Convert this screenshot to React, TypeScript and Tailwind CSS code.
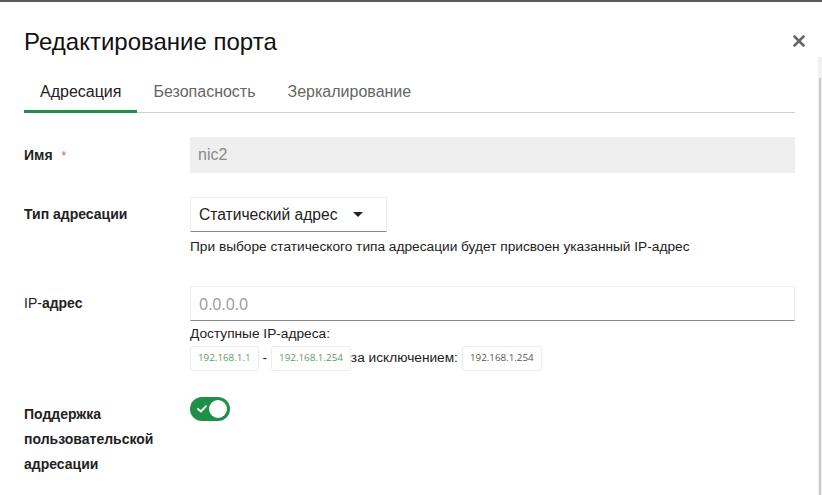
import React, { FC, useState } from "react";

const tabs = ["Адресация", "Безопасность", "Зеркалирование"];

const Chip: FC<{ text: string; green?: boolean }> = ({ text, green }) => (
	<span
		className={`inline-flex items-center h-[25px] px-[7px] border border-[#ececec] rounded-[3px] bg-white text-[9.8px] font-['Open_Sans',sans-serif] ${
			green ? "text-[#5d9a6c]" : "text-[#555]"
		}`}
	>
		{text}
	</span>
);

const App: FC = () => {
	const [tab, setTab] = useState(0);
	const [custom, setCustom] = useState(true);
	return (
		<div className="relative w-full h-[495px] overflow-hidden bg-white border-t-2 border-[#585858] font-['Liberation_Sans',Arial,sans-serif] text-[#222]">
			{/* scrollbar track */}
			<div className="absolute right-0 top-[55px] bottom-0 w-[4px] bg-[#f1f1f1]">
				<div className="absolute left-[1px] top-[21px] bottom-0 w-[2px] bg-[#c9c9c9]" />
			</div>

			<div className="pl-6 pr-[27px]">
				<div className="flex items-center justify-between pt-[25px]">
					<h1 className="text-[24px] leading-[30px] text-[#111]">Редактирование порта</h1>
					<button className="-mr-[10px] text-[#666] mt-[-2px]">
						<svg width="12" height="12" viewBox="0 0 12 12">
							<path d="M1.5 1.5L10.5 10.5M10.5 1.5L1.5 10.5" stroke="currentColor" strokeWidth="2.6" strokeLinecap="round" />
						</svg>
					</button>
				</div>

				<div className="flex mt-[23px] border-b border-[#cfcfcf]">
					{tabs.map((t, i) => (
						<div
							key={t}
							onClick={() => setTab(i)}
							className={`px-4 pb-[6px] text-[16px] leading-[24px] cursor-pointer -mb-px border-b-[3px] ${
								tab === i ? "border-[#1f8f4a] text-[#222]" : "border-transparent text-[#666]"
							}`}
						>
							{t}
						</div>
					))}
				</div>

				{/* Имя */}
				<div className="flex items-center mt-6">
					<div className="w-[166px] text-[14px] font-bold">
						Имя <span className="ml-[5px] text-[12px] font-normal text-[#e25555]">*</span>
					</div>
					<div className="flex-1 h-9 flex items-center px-2 bg-[#efefef] text-[16px] text-[#8a8a8a]">nic2</div>
				</div>

				{/* Тип адресации */}
				<div className="flex mt-6">
					<div className="w-[166px] h-[35px] flex items-center text-[14px] font-bold">Тип адресации</div>
					<div>
						<div className="w-[197px] h-[35px] flex items-center px-2 border border-[#eee] border-b-[#8a8a8a] text-[15.6px]">
							<span>Статический адрес</span>
							<svg className="ml-[15px]" width="10" height="5" viewBox="0 0 10 5">
								<path d="M0 0H10L5 5Z" fill="#222" />
							</svg>
						</div>
						<p className="mt-[5px] text-[13.7px] leading-[20px]">
							При выборе статического типа адресации будет присвоен указанный IP-адрес
						</p>
					</div>
				</div>

				{/* IP-адрес */}
				<div className="flex mt-[29px]">
					<div className="w-[166px] h-[35px] flex items-center text-[14px]">
						<span className="font-medium">IP-</span>
						<span className="font-bold">адрес</span>
					</div>
					<div className="flex-1">
						<div className="h-[35px] flex items-center px-2 border border-[#eee] border-b-[#8a8a8a] text-[16px] text-[#9a9a9a] font-['Open_Sans',sans-serif]">
							0.0.0.0
						</div>
						<p className="mt-[3px] text-[13.7px] leading-[20px]">Доступные IP-адреса:</p>
						<div className="flex items-center mt-[2px] text-[13.7px]">
							<Chip text="192.168.1.1" green />
							<span className="mx-1">-</span>
							<Chip text="192.168.1.254" green />
							<span className="mr-1">за исключением:</span>
							<Chip text="192.168.1.254" />
						</div>
					</div>
				</div>

				{/* Поддержка пользовательской адресации */}
				<div className="flex mt-[26px]">
					<div className="w-[166px] pt-[5px] text-[14px] leading-[25px] font-bold">
						Поддержка
						<br />
						пользовательской
						<br />
						адресации
					</div>
					<button
						onClick={() => setCustom((p) => !p)}
						className={`relative w-10 h-6 rounded-full ${custom ? "bg-[#1f8f4a]" : "bg-[#ccc]"}`}
					>
						{custom && (
							<svg className="absolute left-[7px] top-[8px]" width="10" height="8" viewBox="0 0 10 8">
								<path d="M1 4L3.8 6.5L9 1.2" stroke="white" strokeWidth="1.8" fill="none" strokeLinecap="round" strokeLinejoin="round" />
							</svg>
						)}
						<span
							className={`absolute top-[3px] w-[18px] h-[18px] rounded-full bg-white ${
								custom ? "right-[3px]" : "left-[3px]"
							}`}
						/>
					</button>
				</div>
			</div>
		</div>
	);
};

export default App;
